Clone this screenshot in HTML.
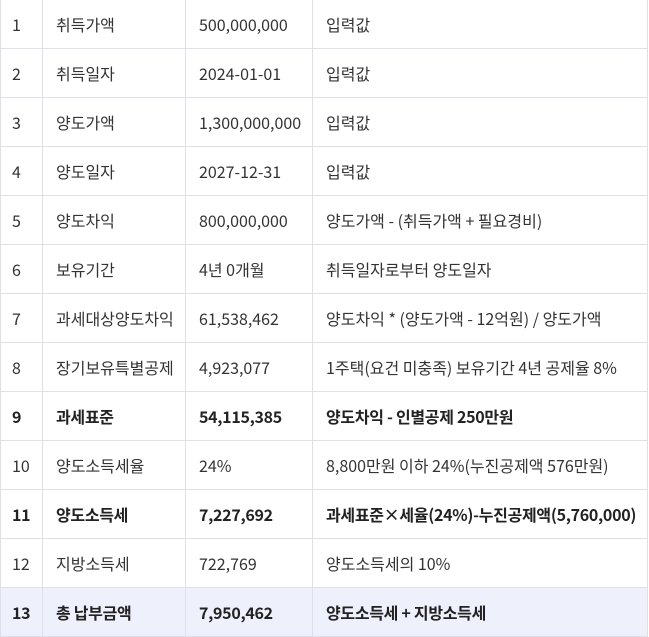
<!DOCTYPE html>
<html><head><meta charset="utf-8"><style>
html,body{margin:0;padding:0;background:#fff;width:649px;height:637px;overflow:hidden}
table{position:absolute;left:0;top:-1px;border-collapse:collapse;font-family:"Noto Sans CJK KR","Liberation Sans",sans-serif;font-size:16px;color:#333;table-layout:fixed;width:647px}
td{border:1px solid #dde0e6;height:49px;padding:0 0 0 13px;white-space:nowrap;box-sizing:border-box;line-height:20px}
td:nth-child(1){padding-left:11px}
tr.b td{font-weight:bold;color:#222;letter-spacing:-0.3px}
tr.t td{background:#eef0fc}
</style></head><body>
<table>
<colgroup><col style="width:42px"><col style="width:143px"><col style="width:127px"><col style="width:335px"></colgroup>
<tr><td>1</td><td>취득가액</td><td>500,000,000</td><td>입력값</td></tr>
<tr><td>2</td><td>취득일자</td><td>2024-01-01</td><td>입력값</td></tr>
<tr><td>3</td><td>양도가액</td><td>1,300,000,000</td><td>입력값</td></tr>
<tr><td>4</td><td>양도일자</td><td>2027-12-31</td><td>입력값</td></tr>
<tr><td>5</td><td>양도차익</td><td>800,000,000</td><td>양도가액 - (취득가액 + 필요경비)</td></tr>
<tr><td>6</td><td>보유기간</td><td>4년 0개월</td><td>취득일자로부터 양도일자</td></tr>
<tr><td>7</td><td>과세대상양도차익</td><td>61,538,462</td><td>양도차익 * (양도가액 - 12억원) / 양도가액</td></tr>
<tr><td>8</td><td>장기보유특별공제</td><td>4,923,077</td><td>1주택(요건 미충족) 보유기간 4년 공제율 8%</td></tr>
<tr class="b"><td>9</td><td>과세표준</td><td>54,115,385</td><td>양도차익 - 인별공제 250만원</td></tr>
<tr><td>10</td><td>양도소득세율</td><td>24%</td><td>8,800만원 이하 24%(누진공제액 576만원)</td></tr>
<tr class="b"><td>11</td><td>양도소득세</td><td>7,227,692</td><td>과세표준×세율(24%)-누진공제액(5,760,000)</td></tr>
<tr><td>12</td><td>지방소득세</td><td>722,769</td><td>양도소득세의 10%</td></tr>
<tr class="b t"><td>13</td><td>총 납부금액</td><td>7,950,462</td><td>양도소득세 + 지방소득세</td></tr>
</table>
</body></html>
